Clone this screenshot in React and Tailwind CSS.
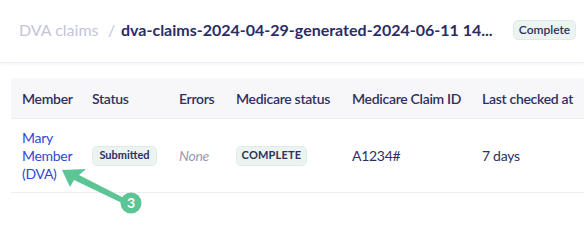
import React from "react";

const font = { fontFamily: "Lato, 'Noto Sans', sans-serif" };

function Badge({ children, className = "" }) {
  return (
    <span
      className={`inline-flex items-center justify-center whitespace-nowrap rounded-[5px] border border-[#dfece6] bg-[#ebf4f0] h-[20px] text-[11px] font-bold text-[#2e2f5c] ${className}`}
    >
      {children}
    </span>
  );
}

export default function App() {
  return (
    <div className="relative w-[584px] h-[246px] bg-white overflow-hidden" style={font}>
      <div className="flex items-center h-[63px] pl-[19px] pr-[8px] pb-[2px] border-b border-[#ececf2] shadow-[0_1px_3px_rgba(40,40,90,0.06)] whitespace-nowrap">
        <span className="text-[16px] text-[#c4c5d8] w-[79px]">DVA claims</span>
        <span className="text-[16px] text-[#c4c5d8] ml-[10px] w-[12px]">/</span>
        <span className="text-[16px] text-[#2b2c66] font-bold ml-[1px]">
          dva-claims-2024-04-29-generated-2024-06-11 14...
        </span>
        <Badge className="ml-auto w-[63px] text-[#2b2c66] font-semibold text-[12px]">Complete</Badge>
      </div>
      <div className="pt-[15px] pl-[11px]">
        <div className="grid grid-cols-[81px_87px_57px_116px_130px_107px] text-[14px] tracking-[-0.3px] text-[#2e2f62] whitespace-nowrap">
          <div className="bg-[#f7f7fa] h-[40px] flex items-center pl-[11px] font-semibold rounded-tl-[4px]">Member</div>
          <div className="bg-[#f7f7fa] h-[40px] flex items-center font-semibold">Status</div>
          <div className="bg-[#f7f7fa] h-[40px] flex items-center font-semibold">Errors</div>
          <div className="bg-[#f7f7fa] h-[40px] flex items-center font-semibold">Medicare status</div>
          <div className="bg-[#f7f7fa] h-[40px] flex items-center font-semibold">Medicare Claim ID</div>
          <div className="bg-[#f7f7fa] h-[40px] flex items-center font-semibold">Last checked at</div>

          <div className="h-[75px] flex items-center pl-[11px] border-y border-[#eeeef2] text-[#2e48d6] leading-[18px]">
            Mary<br />Member<br />(DVA)
          </div>
          <div className="h-[75px] flex items-center border-y border-[#eeeef2]">
            <Badge className="w-[65px] tracking-[0px]">Submitted</Badge>
          </div>
          <div className="h-[75px] flex items-center border-y border-[#eeeef2] italic text-[#9a9bb0]">None</div>
          <div className="h-[75px] flex items-center border-y border-[#eeeef2]">
            <Badge className="w-[71px] tracking-[0.2px]">COMPLETE</Badge>
          </div>
          <div className="h-[75px] flex items-center border-y border-[#eeeef2]">A1234#</div>
          <div className="h-[75px] flex items-center border-y border-[#eeeef2]">7 days</div>
        </div>
      </div>
      <svg className="absolute left-0 top-0" width="584" height="246" viewBox="0 0 584 246">
        <polygon points="62,170 86,169 79,175 124,198 122,203 74,180 70,187" fill="#5cc596" />
        <circle cx="131" cy="203" r="10.5" fill="#5cc596" />
        <text x="131" y="208" textAnchor="middle" fontSize="14" fontWeight="700" fill="#fff" fontFamily="Lato, sans-serif">3</text>
      </svg>
    </div>
  );
}
